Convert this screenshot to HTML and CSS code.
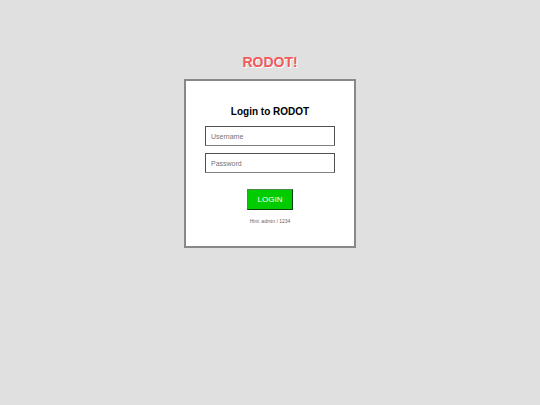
FILE: index.html
```html
<!DOCTYPE html>
<html lang="en">
<head>
<meta charset="utf-8">
<meta name="viewport" content="width=device-width, initial-scale=1">
<title>RODOT!</title>
<link rel="stylesheet" href="styles.css">
</head>
<body>
<main class="page">
  <h1 class="brand">RODOT!</h1>
  <form class="login">
    <h2 class="login-title">Login to RODOT</h2>
    <input class="field" type="text" placeholder="Username" aria-label="Username">
    <input class="field" type="password" placeholder="Password" aria-label="Password">
    <button class="submit" type="button">LOGIN</button>
    <p class="hint">Hint: admin / 1234</p>
  </form>
</main>
</body>
</html>
```

FILE: styles.css
```css
* {
  box-sizing: border-box;
}

body {
  margin: 0;
  background: #e0e0e0;
  color: #000;
  font-family: "Liberation Sans", Arial, sans-serif;
}

.page {
  display: flex;
  flex-direction: column;
  align-items: center;
  padding: 54px 16px;
}

.brand {
  margin: 0 0 9px;
  color: #f05a5a;
  font-size: 14px;
  line-height: 16px;
  text-shadow: 1px 1px 0 #fff;
}

.login {
  display: flex;
  flex-direction: column;
  align-items: center;
  width: 100%;
  max-width: 172px;
  padding: 25px 19px 22px;
  border: 2px solid #888;
  background: #fff;
}

.login-title {
  margin: 0 0 8px;
  font-size: 10px;
  line-height: 12px;
}

.field {
  width: 100%;
  height: 20px;
  margin: 0 0 7px;
  padding: 0 5px;
  border: 1px solid #505050;
  border-bottom-color: #808080;
  border-radius: 0;
  background: #fff;
  font-family: inherit;
  font-size: 7px;
}

.field::placeholder {
  color: #757575;
}

.submit {
  height: 21px;
  margin: 9px 0 8px;
  padding: 0 10px;
  border: 1px solid;
  border-color: #4a8a4a #0a400a #0a400a #4a8a4a;
  background: #00cc00;
  color: #fff;
  font-family: inherit;
  font-size: 8px;
}

.hint {
  margin: 0;
  color: #666;
  font-size: 5px;
  line-height: 6px;
}
```
